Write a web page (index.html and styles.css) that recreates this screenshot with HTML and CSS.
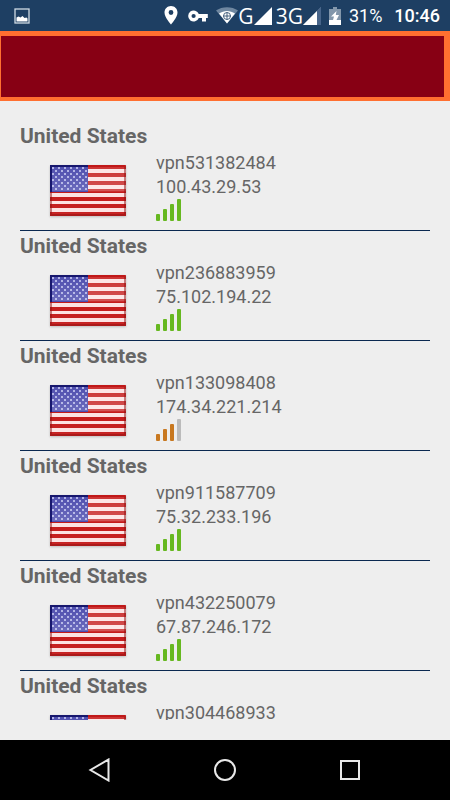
FILE: index.html
```html
<!DOCTYPE html>
<html lang="en">
<head>
    <meta charset="UTF-8">
    <meta name="viewport" content="width=device-width, initial-scale=1.0">
    <title>VPN Servers</title>
    <link rel="stylesheet" href="styles.css">
</head>
<body>
    <!-- Shared drawings -->
    <svg class="defs" width="0" height="0" aria-hidden="true">
        <defs>
            <pattern id="stars" width="6" height="6" patternUnits="userSpaceOnUse">
                <circle cx="3" cy="3" r="1" fill="#c9ccf5"/>
                <circle cx="0" cy="0" r="1" fill="#c9ccf5"/>
                <circle cx="6" cy="0" r="1" fill="#c9ccf5"/>
                <circle cx="0" cy="6" r="1" fill="#c9ccf5"/>
                <circle cx="6" cy="6" r="1" fill="#c9ccf5"/>
            </pattern>
            <linearGradient id="gloss" x1="0" y1="0" x2="0" y2="1">
                <stop offset="0" stop-color="#fff" stop-opacity=".1"/>
                <stop offset=".5" stop-color="#fff" stop-opacity=".25"/>
                <stop offset=".53" stop-color="#fff" stop-opacity="0"/>
                <stop offset="1" stop-color="#fff" stop-opacity=".05"/>
            </linearGradient>
            <symbol id="flag" viewBox="0 0 76 51">
                <rect width="76" height="51" fill="#fde2e2"/>
                <path d="M0 2h76M0 10h76M0 18h76M0 26h76M0 34h76M0 41h76M0 49h76" stroke="#c51a1a" stroke-width="4"/>
                <rect width="38" height="27" fill="#3a3aa6"/>
                <rect x="2" y="2" width="35" height="24" fill="url(#stars)"/>
                <rect width="76" height="51" fill="url(#gloss)"/>
                <path d="M75 1v49H1V27" fill="none" stroke="#8e1010" stroke-opacity=".5" stroke-width="2"/>
                <path d="M38 1h37" stroke="#c01818" stroke-width="2"/>
                <path d="M1 27V1h37" fill="none" stroke="#17176e" stroke-width="2"/>
            </symbol>
            <symbol id="signal" viewBox="0 0 26 22">
                <rect x="0" y="15" width="4" height="7" rx="1"/>
                <rect x="7" y="10" width="4" height="12" rx="1"/>
                <rect x="14" y="5" width="4" height="17" rx="1"/>
                <rect class="last-bar" x="21" y="0" width="4" height="22" rx="1"/>
            </symbol>
        </defs>
    </svg>

    <!-- Status Bar -->
    <div class="status-bar">
        <svg class="picture-icon" width="16" height="16" viewBox="0 0 16 16">
            <rect x="1" y="1" width="14" height="14" fill="none" stroke="#cfdae4" stroke-width="1.3"/>
            <path d="M2.500 13.500V9.500l2-1 2 1 2-1.500 2 2 2-.5 1 1v3z" fill="#fff"/>
        </svg>
        <svg class="pin-icon" width="14" height="19" viewBox="0 0 14 19">
            <path d="M7 0C3.300 0 .5 2.900.5 6.500.5 11.300 7 18.500 7 18.500s6.500-7.200 6.500-12C13.500 2.900 10.700 0 7 0zm0 8.900a2.400 2.400 0 1 1 0-4.800 2.400 2.400 0 0 1 0 4.800z" fill="#fff" fill-rule="evenodd"/>
        </svg>
        <svg class="key-icon" width="20" height="12" viewBox="0 0 20 12">
            <path d="M10.800 4A5.500 5.500 0 1 0 10.800 8H14v3.500h4V8h1.800V4zM5.600 8.100a2.100 2.100 0 1 1 0-4.200 2.100 2.100 0 0 1 0 4.200z" fill="#fff" fill-rule="evenodd"/>
        </svg>
        <svg class="wifi-icon" width="22" height="17" viewBox="0 0 22 17">
            <path d="M11 16.500L0 3.500C6-1 16-1 22 3.500z" fill="#6f87a0"/>
            <path d="M11 16.500L3 6.500c5-3.500 11-3.500 16 0z" fill="#fff"/>
            <circle cx="11" cy="9" r="3.500" fill="none" stroke="#1e3f63" stroke-width=".8"/>
            <path d="M7.500 9h7M11 5.500v7" stroke="#1e3f63" stroke-width=".8"/>
        </svg>
        <span class="network">G</span>
        <svg width="18" height="18" viewBox="0 0 18 18"><path d="M18 0v18H0z" fill="#fff"/></svg>
        <span class="network second">3G</span>
        <svg width="18" height="18" viewBox="0 0 18 18">
            <path d="M18 0v18H0z" fill="#6f87a0"/>
            <path d="M18 0v18h-4V4z" fill="#48658a"/>
            <path d="M14 4v14H0z" fill="#fff"/>
        </svg>
        <svg class="battery-icon" width="12" height="18" viewBox="0 0 12 18">
            <path d="M4 0h4v2h4v16H0V2h4z" fill="#8397ab"/>
            <path d="M0 13h12v5H0z" fill="#fff"/>
            <path d="M7.500 4L2 9.500h3L4 13h3.500L10 8H6.800z" fill="#fff"/>
        </svg>
        <span class="battery">31%</span>
        <span class="clock">10:46</span>
    </div>

    <!-- Banner -->
    <div class="banner"></div>

    <!-- Server List -->
    <ul class="server-list">
        <li class="server">
            <h2>United States</h2>
            <div class="details">
                <svg class="flag" role="img" aria-label="Flag"><use href="#flag"/></svg>
                <div class="info">
                    <div>vpn531382484</div>
                    <div>100.43.29.53</div>
                    <svg class="signal"><use href="#signal"/></svg>
                </div>
            </div>
        </li>
        <li class="server">
            <h2>United States</h2>
            <div class="details">
                <svg class="flag" role="img" aria-label="Flag"><use href="#flag"/></svg>
                <div class="info">
                    <div>vpn236883959</div>
                    <div>75.102.194.22</div>
                    <svg class="signal"><use href="#signal"/></svg>
                </div>
            </div>
        </li>
        <li class="server">
            <h2>United States</h2>
            <div class="details">
                <svg class="flag" role="img" aria-label="Flag"><use href="#flag"/></svg>
                <div class="info">
                    <div>vpn133098408</div>
                    <div>174.34.221.214</div>
                    <svg class="signal medium"><use href="#signal"/></svg>
                </div>
            </div>
        </li>
        <li class="server">
            <h2>United States</h2>
            <div class="details">
                <svg class="flag" role="img" aria-label="Flag"><use href="#flag"/></svg>
                <div class="info">
                    <div>vpn911587709</div>
                    <div>75.32.233.196</div>
                    <svg class="signal"><use href="#signal"/></svg>
                </div>
            </div>
        </li>
        <li class="server">
            <h2>United States</h2>
            <div class="details">
                <svg class="flag" role="img" aria-label="Flag"><use href="#flag"/></svg>
                <div class="info">
                    <div>vpn432250079</div>
                    <div>67.87.246.172</div>
                    <svg class="signal"><use href="#signal"/></svg>
                </div>
            </div>
        </li>
        <li class="server">
            <h2>United States</h2>
            <div class="details">
                <svg class="flag" role="img" aria-label="Flag"><use href="#flag"/></svg>
                <div class="info">
                    <div>vpn304468933</div>
                </div>
            </div>
        </li>
    </ul>

    <!-- Navigation Bar -->
    <nav class="nav-bar">
        <button type="button" aria-label="Back">
            <svg width="24" height="24" viewBox="0 0 24 24"><path d="M20.500 1.500v21L2.500 12z"/></svg>
        </button>
        <button type="button" aria-label="Home">
            <svg width="24" height="24" viewBox="0 0 24 24"><circle cx="12" cy="12" r="10"/></svg>
        </button>
        <button type="button" aria-label="Recent apps">
            <svg width="24" height="24" viewBox="0 0 24 24"><rect x="3" y="3" width="18" height="18"/></svg>
        </button>
    </nav>
</body>
</html>
```
FILE: styles.css
```css
* {
    box-sizing: border-box;
}

body {
    display: flex;
    flex-direction: column;
    height: 100vh;
    margin: 0;
    background-color: #eeeeee;
    font-family: Roboto, "Liberation Sans", sans-serif;
    color: #666;
}

svg {
    display: block;
    flex-shrink: 0;
}

.defs {
    position: absolute;
}

/* Status Bar */
.status-bar {
    display: flex;
    align-items: center;
    flex-shrink: 0;
    height: 31px;
    padding: 0 10px 0 14px;
    background-color: #1e3f63;
    color: #fff;
    font-size: 18px;
}

.picture-icon {
    margin-right: auto;
}

.key-icon {
    margin: 0 8px 0 10px;
}

.network {
    font-family: "Open Sans", sans-serif;
    font-size: 21px;
}

.second {
    margin-left: 4px;
}

.battery-icon {
    margin: 0 8px;
}

.clock {
    margin-left: 12px;
    font-weight: 500;
}

/* Banner */
.banner {
    flex-shrink: 0;
    height: 70px;
    background-color: #870014;
    border: solid #ff6f30;
    border-width: 5px 6px 4px 1px;
}

/* Server List */
.server-list {
    flex: 1;
    min-height: 0;
    margin: 20px;
    padding: 0;
    overflow: hidden;
    list-style: none;
}

.server {
    padding-bottom: 9px;
    border-bottom: 1px solid #0a2850;
}

.server h2 {
    margin: 0;
    font-size: 21px;
    font-weight: 700;
    line-height: 30px;
}

.details {
    display: flex;
    gap: 30px;
    padding-left: 30px;
}

.flag {
    width: 76px;
    height: 51px;
    margin-top: 14px;
    filter: drop-shadow(0 1px 1px rgba(0, 0, 0, 0.2));
}

.info {
    font-size: 18px;
    line-height: 24px;
}

/* Signal Strength */
.signal {
    width: 26px;
    height: 22px;
    fill: #66b820;
}

.signal.medium {
    --last-bar: #bbb;
    fill: #c87820;
}

.last-bar {
    fill: var(--last-bar, inherit);
}

/* Navigation Bar */
.nav-bar {
    display: flex;
    justify-content: center;
    align-items: center;
    gap: 101px;
    flex-shrink: 0;
    height: 60px;
    background-color: #000;
}

.nav-bar button {
    padding: 0;
    border: none;
    background: none;
    cursor: pointer;
}

.nav-bar svg {
    fill: none;
    stroke: #e8e8e8;
    stroke-width: 2;
}
```
